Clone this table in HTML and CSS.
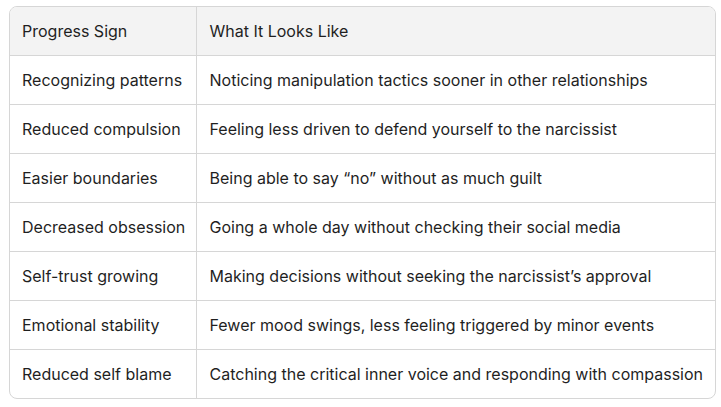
FILE: index.html
```html
<!DOCTYPE html>
<html>
<head>
<meta charset="utf-8">
<link rel="stylesheet" href="styles.css">
</head>
<body>
<div class="wrap">
<table class="tbl">
<thead>
<tr><th class="c1">Progress Sign</th><th>What It Looks Like</th></tr>
</thead>
<tbody>
<tr><td class="c1">Recognizing patterns</td><td>Noticing manipulation tactics sooner in other relationships</td></tr>
<tr><td class="c1">Reduced compulsion</td><td>Feeling less driven to defend yourself to the narcissist</td></tr>
<tr><td class="c1">Easier boundaries</td><td>Being able to say “no” without as much guilt</td></tr>
<tr><td class="c1">Decreased obsession</td><td>Going a whole day without checking their social media</td></tr>
<tr><td class="c1">Self-trust growing</td><td>Making decisions without seeking the narcissist’s approval</td></tr>
<tr><td class="c1">Emotional stability</td><td>Fewer mood swings, less feeling triggered by minor events</td></tr>
<tr><td class="c1">Reduced self blame</td><td>Catching the critical inner voice and responding with compassion</td></tr>
</tbody>
</table>
</div>
</body>
</html>
```
FILE: styles.css
```css
html, body { margin: 0; padding: 0; background: #fff; }
body { padding: 6px 0 0 9px; font-family: Inter, "Noto Sans", sans-serif; }
.wrap {
  width: 705px;
  border: 1px solid #d6d6d6;
  border-radius: 8px;
  overflow: hidden;
}
.tbl {
  width: 100%;
  table-layout: fixed;
  border-collapse: collapse;
  font-size: 16px;
  color: #1f1f1f;
}
.tbl th, .tbl td {
  text-align: left;
  font-weight: 400;
  height: 48px;
  padding: 0 13px;
  box-sizing: border-box;
  vertical-align: middle;
  white-space: nowrap;
}
.tbl td { height: 49px; }
.tbl th { background: #f3f3f3; }
.tbl tbody td { border-top: 1px solid #d6d6d6; }
.tbl .c1 { width: 186px; padding-left: 12px; border-right: 1px solid #d6d6d6; }
```
